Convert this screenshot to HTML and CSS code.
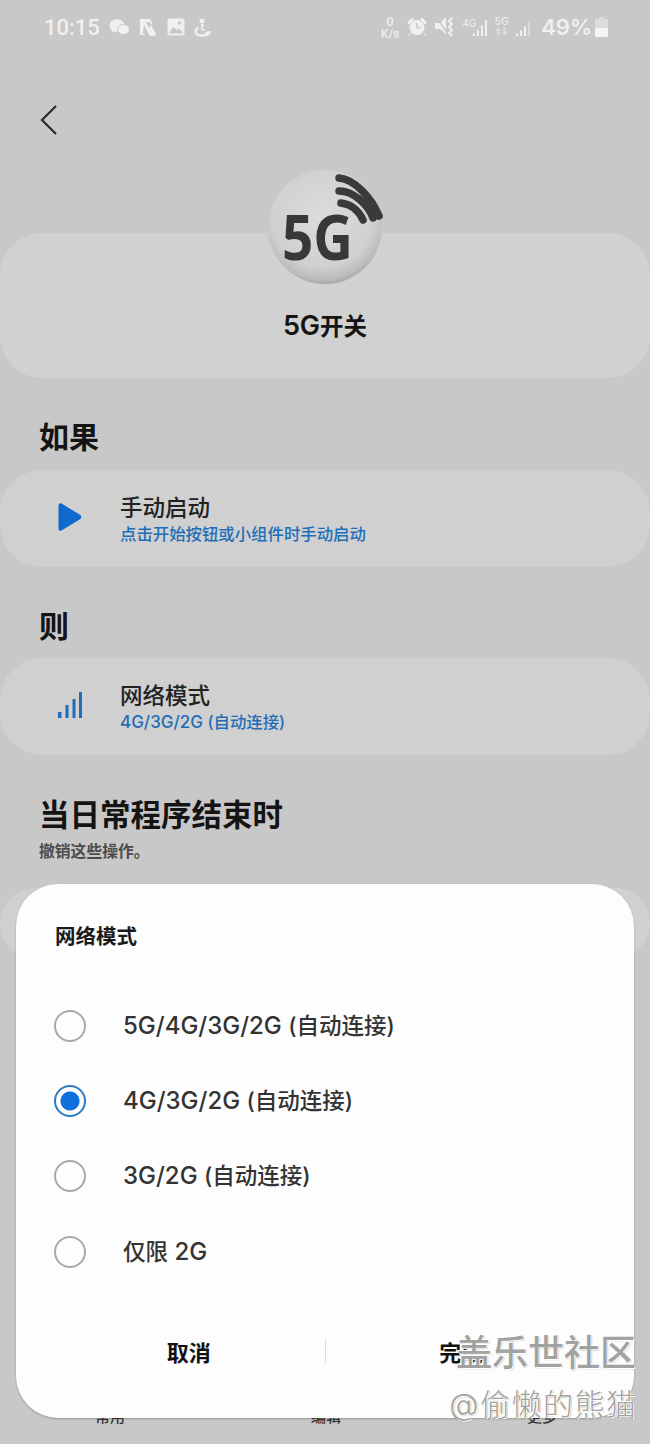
FILE: index.html
```html
<!DOCTYPE html>
<html lang="zh">
<head>
<meta charset="utf-8">
<title>5G开关</title>
<link rel="stylesheet" href="styles.css">
</head>
<body>
<div class="screen">
  <header class="status">
    <div class="status-left">
      <span class="clock">10:15</span>
      <svg class="si" width="21" height="18" viewBox="0 0 21 18"><ellipse cx="8" cy="7.5" rx="7.5" ry="6.3" fill="#f0f0f0"/><path d="M3 11l-.5 4 4-2.500z" fill="#f0f0f0"/><ellipse cx="14.500" cy="11.500" rx="6" ry="5" fill="#f0f0f0" stroke="#c8c8c8" stroke-width="1"/></svg>
      <svg class="si" width="19" height="18" viewBox="0 0 19 18"><path d="M1 1h10l2 3v3l-3-3H7l3 6 2-3 5 9-1 2h-5L5 7l-1 8 2 2H2l-1-1z" fill="#f0f0f0"/></svg>
      <svg class="si" width="18" height="18" viewBox="0 0 18 18"><rect x="0.500" y="0.500" width="17" height="17" rx="2.500" fill="#f0f0f0"/><path d="M2.500 14l4-5 3 3 2-1.500 4 3.500v1.500h-13z" fill="#c8c8c8"/><circle cx="12.500" cy="5" r="1.800" fill="#c8c8c8"/></svg>
      <svg class="si" width="17" height="19" viewBox="0 0 17 19"><circle cx="8" cy="3" r="2.500" fill="#f0f0f0"/><path d="M7 6l3 .5-1.500 4 3 1.500-2.500 1-2-1.500z" fill="#f0f0f0"/><path d="M4.500 9.500c-5 3-3 8 3 8 4 0 8-1 8.500-4-1 1.500-3 1.500-4.500 1.200" fill="none" stroke="#f0f0f0" stroke-width="2.400"/></svg>
    </div>
    <div class="status-right">
      <div class="speed"><span class="speed-num">0</span><span>K/s</span></div>
      <svg class="si" width="20" height="20" viewBox="0 0 20 20"><circle cx="10" cy="10.500" r="7.500" fill="#f0f0f0"/><path d="M10 6v4.800h3.500" fill="none" stroke="#c8c8c8" stroke-width="1.600"/><path d="M.5 5.500L5 1l1.500 1.500-4.500 4.500zM19.500 5.500L15 1l-1.500 1.500 4.500 4.500zM3.500 16l-2 3M16.500 16l2 3" fill="#f0f0f0" stroke="#f0f0f0"/></svg>
      <svg class="si" width="20" height="22" viewBox="0 0 20 22"><path d="M0 7h5l6-6v17l-6-5H0z" fill="#f0f0f0"/><path d="M1 1l12 17" stroke="#c8c8c8" stroke-width="1.500"/><path d="M17 2l-3 3 3 3-3 3 3 3-3 3 3 3" fill="none" stroke="#f0f0f0" stroke-width="2"/></svg>
      <div class="signal">
        <span class="net">4G</span>
        <svg class="bars" width="14" height="19" viewBox="0 0 14 18"><path d="M0 15h2v2.500H0zM4 11.500h2v6H4zM8 7h2v10.500H8zM12 1.500h2v16h-2z" fill="#f0f0f0"/></svg>
      </div>
      <div class="net-stack">
        <span class="net">5G</span>
        <svg width="15" height="9" viewBox="0 0 13 7"><path d="M3 7V3H1l3-3 2 3H5v4zM8 0v4H7l2.500 3L12 4h-2V0z" fill="#dcdcdc"/></svg>
      </div>
      <svg class="si sig2" width="17" height="17" viewBox="0 0 17 16"><path d="M1 13h2v2.500H1zM5 10h2v5.500H5zM9 6h2v9.500H9z" fill="#f0f0f0"/><path d="M13 1h2v14.500h-2z" fill="#dcdcdc"/></svg>
      <span class="batt-text">49%</span>
      <svg class="si" width="13" height="20" viewBox="0 0 13 20"><path d="M4 0h5v2h3a1 1 0 0 1 1 1v16a1 1 0 0 1-1 1H1a1 1 0 0 1-1-1V3a1 1 0 0 1 1-1h3z" fill="#dcdcdc"/><path d="M0 11h13v8a1 1 0 0 1-1 1H1a1 1 0 0 1-1-1z" fill="#f4f4f4"/></svg>
    </div>
  </header>

  <div class="back">
    <svg width="18" height="32" viewBox="0 0 18 32"><path d="M16 2L2 16l14 14" fill="none" stroke="#2b2b2b" stroke-width="2.200"/></svg>
  </div>

  <section class="hero">
    <div class="ball">
      <svg width="116" height="118" viewBox="0 0 116 118">
        <defs>
          <radialGradient id="ballg" cx="0.480" cy="0.400" r="0.600">
            <stop offset="0" stop-color="#dcdcdc"/>
            <stop offset="0.750" stop-color="#d0d0d0"/>
            <stop offset="0.930" stop-color="#bcbcbc"/>
            <stop offset="1" stop-color="#a8a8a8"/>
          </radialGradient>
        </defs>
        <circle cx="58" cy="58" r="57" fill="url(#ballg)"/>
        <path d="M72 9C88 10 105 30 112 47" fill="none" stroke="#3a3a3a" stroke-width="7.500" stroke-linecap="round"/>
        <path d="M72 22C86 22 101 35 106 49" fill="none" stroke="#3a3a3a" stroke-width="7.500" stroke-linecap="round"/>
        <path d="M74 34C84 35 92 42 96 51" fill="none" stroke="#3a3a3a" stroke-width="7.500" stroke-linecap="round"/>
        <text x="15" y="91" class="ball-text" textLength="71" lengthAdjust="spacingAndGlyphs">5G</text>
      </svg>
    </div>
    <h1 class="hero-title">5G<span class="hero-cjk">开关</span></h1>
  </section>

  <h2 class="section">如果</h2>
  <div class="card">
    <div class="card-icon">
      <svg width="24" height="30" viewBox="0 0 24 30"><path d="M3.500 1.500L22 12.800a2.500 2.500 0 0 1 0 4.400L3.500 28.500A2 2 0 0 1 .5 27V3A2 2 0 0 1 3.500 1.500z" fill="#0f69cf"/></svg>
    </div>
    <div class="card-text">
      <div class="card-title">手动启动</div>
      <div class="card-sub"><span class="cjk">点击开始按钮或小组件时手动启动</span></div>
    </div>
  </div>

  <h2 class="section then">则</h2>
  <div class="card">
    <div class="card-icon">
      <svg width="26" height="28" viewBox="0 0 26 28"><path d="M1 21h3.500v6H1zM8.500 14H11.500v13H8.500zM15.500 8H18.500v19h-3zM22 1H25v26h-3z" fill="#1e6db8"/></svg>
    </div>
    <div class="card-text">
      <div class="card-title">网络模式</div>
      <div class="card-sub">4G/3G/2G <span class="cjk">(自动连接)</span></div>
    </div>
  </div>

  <h2 class="section end">当日常程序结束时</h2>
  <p class="note">撤销这些操作。</p>
  <div class="card hidden-card"></div>

  <nav class="bottom">
    <span>常用</span><span>编辑</span><span>更多</span>
  </nav>

  <div class="dialog">
    <div class="dialog-title">网络模式</div>
    <ul class="options">
      <li class="option"><span class="radio"></span><span>5G/4G/3G/2G <span class="cjk">(自动连接)</span></span></li>
      <li class="option"><span class="radio on"></span><span>4G/3G/2G <span class="cjk">(自动连接)</span></span></li>
      <li class="option"><span class="radio"></span><span>3G/2G <span class="cjk">(自动连接)</span></span></li>
      <li class="option"><span class="radio"></span><span><span class="cjk">仅限</span> 2G</span></li>
    </ul>
    <div class="actions">
      <div class="action">取消</div>
      <div class="action-sep"></div>
      <div class="action">完成</div>
    </div>
  </div>

  <div class="watermark">
    <div class="wm-big">盖乐世社区</div>
    <div class="wm-small">@偷懒的熊猫</div>
  </div>
</div>
</body>
</html>
```
FILE: styles.css
```css
* { box-sizing: border-box; }
html, body { margin: 0; padding: 0; }
body {
  width: 650px;
  height: 1444px;
  overflow: hidden;
  background: #c8c8c8;
  font-family: Inter, "Noto Sans CJK SC", sans-serif;
  color: #1e1e1e;
}
.screen {
  position: relative;
  width: 650px;
  height: 1444px;
  overflow: hidden;
  display: flex;
  flex-direction: column;
}
.status {
  height: 54px;
  flex: none;
  display: flex;
  align-items: center;
  justify-content: space-between;
  padding: 0 42px 0 44px;
  color: #f0f0f0;
}
.status-left, .status-right { display: flex; align-items: center; }
.status-left { gap: 9px; }
.status-right { gap: 8px; }
.clock { font-family: Roboto, sans-serif; font-size: 22px; font-weight: 500; }
.speed {
  display: flex;
  flex-direction: column;
  align-items: center;
  font-family: Roboto, sans-serif;
  font-size: 12px;
  font-weight: 500;
  line-height: 12px;
  margin-top: 2px;
}
.speed-num { font-size: 13px; }
.signal { display: flex; align-items: flex-end; margin-top: -2px; margin-left: -1px; }
.bars { margin-left: -3px; margin-bottom: -2px; }
.net { font-size: 10px; line-height: 10px; align-self: flex-start; font-weight: 400; }
.net-stack { display: flex; flex-direction: column; align-items: center; margin-top: -2px; margin-left: -1px; }
.net-stack .net { align-self: center; font-size: 10.500px; }
.sig2 { margin-top: 2px; margin-left: -2px; }
.batt-text { font-size: 22px; font-weight: 600; margin-right: -5px; margin-left: 1px; }
.si { display: block; flex: none; }
.back {
  flex: none;
  height: 48px;
  margin-top: 50px;
  padding: 0 0 0 40px;
}
.back svg { display: block; }
.hero {
  position: relative;
  flex: none;
  height: 145px;
  margin-top: 81px;
  background: #d1d1d1;
  border-radius: 42px;
  display: flex;
  justify-content: center;
  align-items: flex-end;
  padding-bottom: 34px;
}
.ball {
  position: absolute;
  left: 267px;
  top: -64px;
}
.ball svg { display: block; }
.ball-text {
  font-family: "Open Sans", sans-serif;
  font-size: 63px;
  font-weight: 700;
  fill: #383838;
}
.hero-title {
  margin: 0;
  font-size: 27px;
  line-height: 34px;
  font-weight: 600;
  color: #141414;
}
.hero-cjk { font-size: 23.500px; font-weight: 700; }
.section {
  flex: none;
  margin: 40px 0 14px 39px;
  font-size: 30px;
  line-height: 38px;
  font-weight: 700;
  color: #141414;
}
.section.then { margin-top: 40px; margin-bottom: 13px; }
.section.end { margin-top: 41px; margin-bottom: 0; font-size: 30.500px; }
.note {
  flex: none;
  margin: 8px 0 0 39px;
  font-size: 15.800px;
  line-height: 20px;
  font-weight: 700;
  color: #4c4c4c;
}
.card {
  flex: none;
  height: 97px;
  background: #d0d0d0;
  border-radius: 42px;
  display: flex;
  align-items: center;
}
.card-icon {
  width: 120px;
  flex: none;
  display: flex;
  justify-content: center;
  padding-left: 20px;
  margin-top: -3px;
}
.card-icon svg { display: block; }
.card-text { display: flex; flex-direction: column; margin-top: -1px; }
.card-title { font-size: 22.500px; line-height: 31px; font-weight: 500; color: #222; }
.card-sub { font-size: 17px; line-height: 22px; font-weight: 500; color: #1e6db8; }
.card-sub .cjk { font-size: 16.400px; }
.hidden-card { margin-top: 26px; height: 70px; }
.bottom {
  position: absolute;
  left: 0;
  right: 0;
  top: 1407px;
  display: grid;
  grid-template-columns: repeat(3, 1fr);
  padding-left: 2px;
  text-align: center;
  font-size: 15px;
  line-height: 20px;
  font-weight: 500;
  color: #333;
}
.dialog {
  position: absolute;
  left: 16px;
  top: 884px;
  width: 618px;
  height: 534px;
  background: #fdfdfd;
  border-radius: 42px;
  box-shadow: 0 1px 2px rgba(0,0,0,0.25);
  display: flex;
  flex-direction: column;
}
.dialog-title {
  padding: 39px 0 0 39px;
  font-size: 20.500px;
  line-height: 28px;
  font-weight: 700;
  color: #1a1a1a;
}
.options {
  list-style: none;
  margin: 35px 0 0;
  padding: 0;
  display: flex;
  flex-direction: column;
}
.option {
  height: 75.300px;
  display: flex;
  align-items: center;
  gap: 37px;
  padding-left: 38px;
  font-size: 24px;
  font-weight: 500;
  color: #333;
}
.option .cjk { font-size: 22.500px; }
.radio {
  width: 32px;
  height: 32px;
  flex: none;
  border: 2px solid #a8a8a8;
  border-radius: 50%;
  margin-top: 4px;
}
.radio.on {
  border-color: #2b7ac4;
  background: radial-gradient(circle, #0e6fdc 0 9px, transparent 10px);
}
.actions {
  margin-top: auto;
  height: 130px;
  padding: 0 37px 4px;
  display: flex;
  align-items: center;
}
.action {
  flex: 1;
  text-align: center;
  font-size: 22px;
  font-weight: 700;
  color: #111;
}
.action-sep { width: 1px; height: 24px; background: #dcdcdc; flex: none; }
.watermark {
  position: absolute;
  right: 14px;
  top: 1331px;
  display: flex;
  flex-direction: column;
  align-items: flex-end;
  color: #a2a2a2;
  text-shadow: 1px 1px 0 #fff, -1px -1px 0 #fff, 1px 1px 1px #777;
}
.wm-big { font-size: 36px; line-height: 44px; font-weight: 500; }
.wm-small { font-size: 30px; line-height: 42px; margin-top: 8px; font-weight: 300; letter-spacing: 1.500px; margin-right: -1.500px; }
```
